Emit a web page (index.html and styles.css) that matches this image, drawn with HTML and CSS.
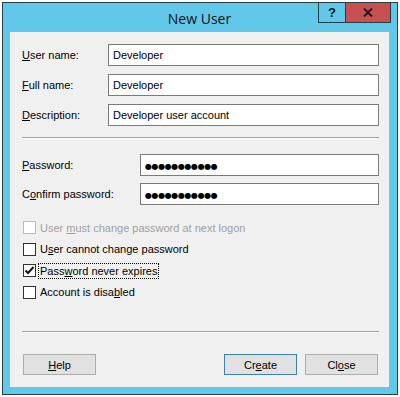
FILE: index.html
```html
<!DOCTYPE html>
<html>
<head>
<meta charset="utf-8">
<link rel="stylesheet" href="styles.css">
</head>
<body>
<div class="window">
  <div class="titlebar">
    <div class="title">New User</div>
    <div class="controls">
      <div class="ctl help-ctl">?</div>
      <div class="ctl close-ctl">
        <svg width="10" height="9" viewBox="0 0 10 9"><path d="M1 0.5 L9 8.5 M9 0.5 L1 8.5" stroke="#1b1b1b" stroke-width="2"/></svg>
      </div>
    </div>
  </div>
  <div class="client">
    <div class="rows top-rows">
      <div class="row"><label class="lbl"><u>U</u>ser name:</label><div class="field">Developer</div></div>
      <div class="row"><label class="lbl"><u>F</u>ull name:</label><div class="field">Developer</div></div>
      <div class="row"><label class="lbl"><u>D</u>escription:</label><div class="field">Developer user account</div></div>
    </div>
    <div class="sep"></div>
    <div class="rows pw-rows">
      <div class="row"><label class="lbl"><u>P</u>assword:</label><div class="field pw"><span class="dots">●●●●●●●●●●●</span></div></div>
      <div class="row"><label class="lbl">C<u>o</u>nfirm password:</label><div class="field pw"><span class="dots">●●●●●●●●●●●</span></div></div>
    </div>
    <div class="checks">
      <div class="chk disabled"><span class="box"></span><span class="ctext">User <u>m</u>ust change password at next logon</span></div>
      <div class="chk"><span class="box"></span><span class="ctext">U<u>s</u>er cannot change password</span></div>
      <div class="chk"><span class="box"><svg width="11" height="11" viewBox="0 0 11 11"><path d="M1.5 5.5 L4 8 L9.5 2" fill="none" stroke="#111" stroke-width="2"/></svg></span><span class="ctext focus">Pass<u>w</u>ord never expires</span></div>
      <div class="chk"><span class="box"></span><span class="ctext">Account is disa<u>b</u>led</span></div>
    </div>
    <div class="spacer"></div>
    <div class="sep bottom-sep"></div>
    <div class="buttons">
      <button class="btn"><u>H</u>elp</button>
      <div class="right-btns">
        <button class="btn default">Cr<u>e</u>ate</button>
        <button class="btn">Cl<u>o</u>se</button>
      </div>
    </div>
  </div>
</div>
</body>
</html>
```
FILE: styles.css
```css
* { box-sizing: border-box; }
html, body { margin: 0; padding: 0; background: #ffffff; }
body {
  font-family: "Liberation Sans", Arial, sans-serif;
  font-size: 11px;
  color: #000;
}
.window {
  margin: 2px 0 0 2px;
  width: 396px;
  height: 393px;
  border: 1px solid #283c46;
  background: #62c8ea;
  padding: 0 8px 7px 7px;
  display: flex;
  flex-direction: column;
}
.titlebar {
  position: relative;
  height: 29px;
  flex: none;
}
.title {
  text-align: center;
  font-size: 14px;
  line-height: 29px;
  padding-top: 1px;
  color: #111;
  font-family: "Open Sans", "Liberation Sans", sans-serif;
}
.controls {
  position: absolute;
  top: -1px;
  right: -2px;
  display: flex;
}
.ctl {
  height: 21px;
  display: flex;
  align-items: center;
  justify-content: center;
}
.help-ctl {
  width: 27px;
  border: 1px solid #283c46;
  border-right: none;
  font-weight: bold;
  font-size: 13px;
  color: #111;
}
.close-ctl {
  width: 46px;
  background: #c75050;
  border: 1px solid #283c46;
}
.client {
  flex: 1;
  background: #f0f0f0;
  padding: 12px 10px 12px 12px;
  display: flex;
  flex-direction: column;
}
.rows { display: flex; flex-direction: column; gap: 8px; }
.pw-rows { gap: 7px; }
.row { display: flex; align-items: center; }
.lbl { flex: none; }
.top-rows .lbl { width: 86px; }
.pw-rows .lbl { width: 118px; }
u { text-decoration: underline; text-underline-offset: 1px; }
.field {
  flex: 1;
  height: 22px;
  background: #fff;
  border: 1px solid #7a7a7a;
  padding: 0 4px;
  line-height: 20px;
  white-space: nowrap;
  font-size: 11px;
}
.dots {
  font-size: 8px;
  letter-spacing: -0.4px;
  font-family: "DejaVu Sans", sans-serif;
}
.sep {
  height: 2px;
  border-top: 1px solid #a0a0a0;
  border-bottom: 1px solid #ffffff;
  margin: 11px 0 15px 0;
}
.checks {
  margin-top: 16px;
  padding-left: 1px;
  display: flex;
  flex-direction: column;
  gap: 8.5px;
}
.chk { display: flex; align-items: center; height: 13px; }
.box {
  width: 13px;
  height: 13px;
  border: 1px solid #333;
  background: #fff;
  margin-right: 3px;
  display: flex;
  align-items: center;
  justify-content: center;
  flex: none;
}
.chk.disabled .box { border-color: #bcbcbc; }
.chk.disabled .ctext { color: #a0a0a0; }
.ctext { line-height: 14px; padding: 0 1px; }
.ctext.focus { outline: 1px dotted #000; }
.spacer { flex: 1; }
.bottom-sep { margin: 0 0 21px 0; }
.buttons {
  display: flex;
  justify-content: space-between;
  padding-left: 1px;
}
.right-btns { display: flex; gap: 8px; padding-right: 1px; }
.btn {
  width: 73px;
  height: 21px;
  background: #e1e1e1;
  border: 1px solid #adadad;
  font-family: inherit;
  font-size: 11px;
  color: #000;
  padding: 0;
  border-radius: 0;
}
.btn.default { border-color: #3c7fb1; }
```
